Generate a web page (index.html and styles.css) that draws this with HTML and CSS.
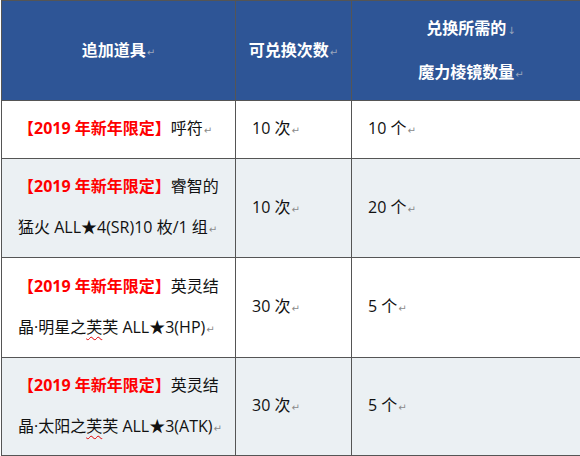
FILE: index.html
```html
<!DOCTYPE html>
<html lang="zh-CN">
<head>
<meta charset="utf-8">
<link rel="stylesheet" href="styles.css">
</head>
<body>
<div class="wrap">
<table class="tbl">
  <colgroup>
    <col class="c1"><col class="c2"><col class="c3">
  </colgroup>
  <thead>
    <tr class="head">
      <th>追加道具<span class="pm">↵</span></th>
      <th>可兑换次数<span class="pm">↵</span></th>
      <th class="two">兑换所需的<span class="pm">↓</span><br>魔力棱镜数量<span class="pm">↵</span></th>
    </tr>
  </thead>
  <tbody>
    <tr class="r1">
      <td class="item"><span class="red">【2019 年新年限定】</span>呼符<span class="pm">↵</span></td>
      <td>10 次<span class="pm">↵</span></td>
      <td>10 个<span class="pm">↵</span></td>
    </tr>
    <tr class="r2 alt">
      <td class="item"><span class="red">【2019 年新年限定】</span>睿智的<br>猛火 ALL★4(SR)10 枚/1 组<span class="pm">↵</span></td>
      <td>10 次<span class="pm">↵</span></td>
      <td>20 个<span class="pm">↵</span></td>
    </tr>
    <tr class="r3">
      <td class="item"><span class="red">【2019 年新年限定】</span>英灵结<br>晶·明星之<span class="sq">芙</span>芙 ALL★3(HP)<span class="pm">↵</span></td>
      <td>30 次<span class="pm">↵</span></td>
      <td>5 个<span class="pm">↵</span></td>
    </tr>
    <tr class="r4 alt">
      <td class="item"><span class="red">【2019 年新年限定】</span>英灵结<br>晶·太阳之<span class="sq">芙</span>芙 ALL★3(ATK)<span class="pm">↵</span></td>
      <td>30 次<span class="pm">↵</span></td>
      <td>5 个<span class="pm">↵</span></td>
    </tr>
  </tbody>
</table>
</div>
</body>
</html>
```

FILE: styles.css
```css
html, body {
  margin: 0;
  padding: 0;
  background: #ffffff;
  overflow: hidden;
}
body {
  width: 580px;
  height: 456px;
}
.wrap {
  padding-left: 1px;
  width: 579px;
  height: 456px;
  overflow: hidden;
}
.tbl {
  border-collapse: collapse;
  table-layout: fixed;
  width: 589px;
  font-family: "Open Sans", "Noto Sans CJK SC", sans-serif;
  font-size: 16px;
  color: #111;
}
.c1 { width: 234px; }
.c2 { width: 116px; }
.c3 { width: 239px; }
.tbl th, .tbl td {
  border: 1px solid #555555;
  padding: 0 8px 0 16px;
  vertical-align: middle;
  text-align: left;
  line-height: 41px;
  white-space: nowrap;
}
.tbl th {
  background: #2e5596;
  color: #ffffff;
  font-weight: bold;
  text-align: center;
  padding: 0;
  font-family: "Noto Sans CJK SC", sans-serif;
}
.tbl th.two {
  line-height: 40px;
}
.head { height: 100px; }
.r1 { height: 58px; }
.r2 { height: 99px; }
.r3 { height: 100px; }
.r4 { height: 98px; }
.alt td { background: #ebf0f3; }
.item { padding-left: 17px; }
.red {
  color: #ff0000;
  font-weight: bold;
}
.pm {
  font-family: "DejaVu Sans", sans-serif;
  font-size: 10px;
  font-weight: normal;
  color: #8a8a8a;
  margin-left: 1px;
}
.tbl th .pm { color: #9aa6bd; }
.sq {
  text-decoration: underline wavy #e00000;
  text-decoration-thickness: 1px;
  text-underline-offset: 3px;
}
```
